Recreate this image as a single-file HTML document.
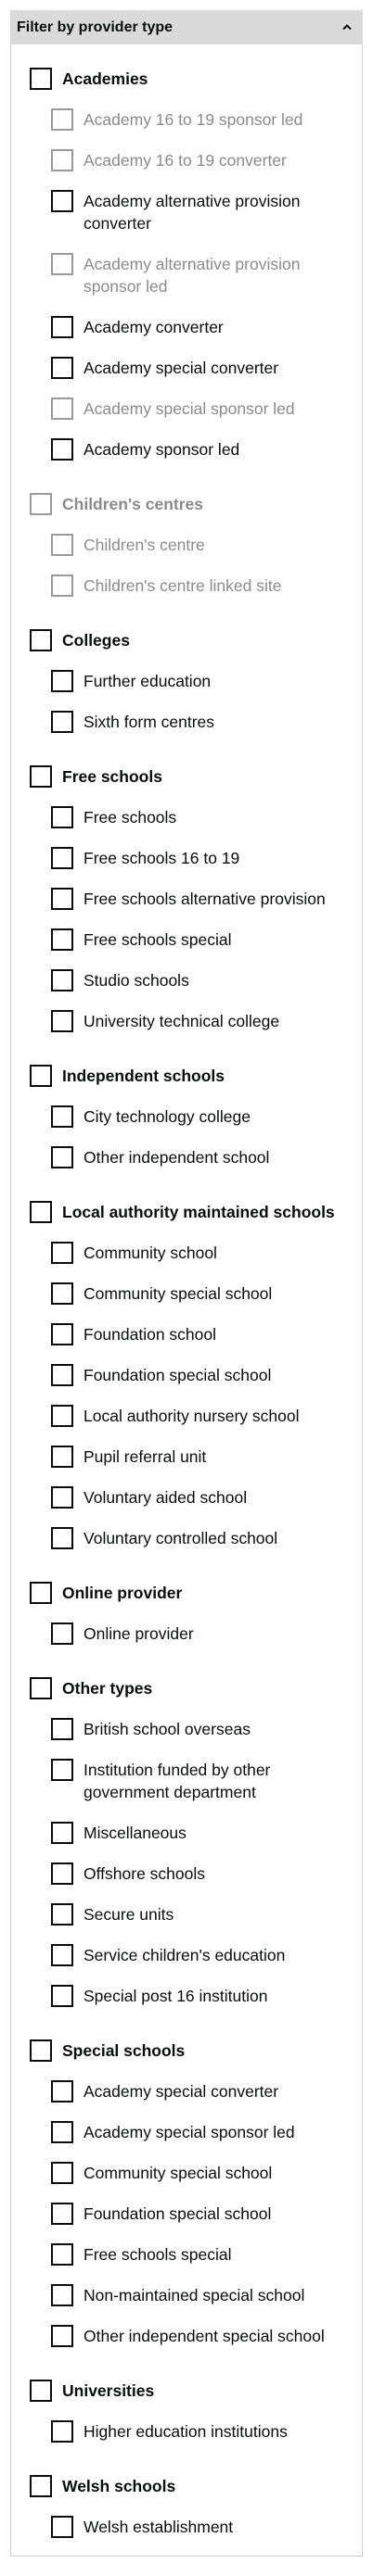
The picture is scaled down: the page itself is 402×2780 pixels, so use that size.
<!DOCTYPE html>
<html><head><meta charset="utf-8"><style>
*{box-sizing:border-box;margin:0;padding:0}
body{width:402px;height:2780px;background:#fff;font-family:"Liberation Sans",Arial,sans-serif;color:#0b0c0c;font-size:17.5px;position:relative}
.c{position:absolute;left:11px;top:11px;width:380px;height:2748px;border:1px solid #cfcfcf}
.h{height:37px;background:#dadada;font-weight:bold;font-size:16px;line-height:37px;padding-left:7px;position:relative;margin:-1px -1px 0 -1px}
.h svg{position:absolute;right:11px;top:14px}
.b{padding:25px 0 0 20px}
.r{position:relative;line-height:24px;min-height:24px;margin-bottom:20px;padding-left:35px}
.r::before{content:"";position:absolute;left:0;top:0;width:24px;height:24px;border:2px solid #0b0c0c;box-sizing:border-box}
.p{font-weight:bold}
.k{margin-left:23px}
.d{color:#8b8b8b}.d::before{border-color:#9a9a9a}
.g{margin-bottom:35px}
</style></head><body>
<div class="c">
<div class="h">Filter by provider type<svg width="12" height="8" viewBox="0 0 12 8"><path d="M2 6.5 L6 2.5 L10 6.5" fill="none" stroke="#0b0c0c" stroke-width="2"/></svg></div>
<div class="b">
<div class="r p">Academies</div>
<div class="r k d">Academy 16 to 19 sponsor led</div>
<div class="r k d">Academy 16 to 19 converter</div>
<div class="r k">Academy alternative provision<br>converter</div>
<div class="r k d">Academy alternative provision<br>sponsor led</div>
<div class="r k">Academy converter</div>
<div class="r k">Academy special converter</div>
<div class="r k d">Academy special sponsor led</div>
<div class="r k g">Academy sponsor led</div>
<div class="r p d">Children's centres</div>
<div class="r k d">Children's centre</div>
<div class="r k d g">Children's centre linked site</div>
<div class="r p">Colleges</div>
<div class="r k">Further education</div>
<div class="r k g">Sixth form centres</div>
<div class="r p">Free schools</div>
<div class="r k">Free schools</div>
<div class="r k">Free schools 16 to 19</div>
<div class="r k">Free schools alternative provision</div>
<div class="r k">Free schools special</div>
<div class="r k">Studio schools</div>
<div class="r k g">University technical college</div>
<div class="r p">Independent schools</div>
<div class="r k">City technology college</div>
<div class="r k g">Other independent school</div>
<div class="r p">Local authority maintained schools</div>
<div class="r k">Community school</div>
<div class="r k">Community special school</div>
<div class="r k">Foundation school</div>
<div class="r k">Foundation special school</div>
<div class="r k">Local authority nursery school</div>
<div class="r k">Pupil referral unit</div>
<div class="r k">Voluntary aided school</div>
<div class="r k g">Voluntary controlled school</div>
<div class="r p">Online provider</div>
<div class="r k g">Online provider</div>
<div class="r p">Other types</div>
<div class="r k">British school overseas</div>
<div class="r k">Institution funded by other<br>government department</div>
<div class="r k">Miscellaneous</div>
<div class="r k">Offshore schools</div>
<div class="r k">Secure units</div>
<div class="r k">Service children's education</div>
<div class="r k g">Special post 16 institution</div>
<div class="r p">Special schools</div>
<div class="r k">Academy special converter</div>
<div class="r k">Academy special sponsor led</div>
<div class="r k">Community special school</div>
<div class="r k">Foundation special school</div>
<div class="r k">Free schools special</div>
<div class="r k">Non-maintained special school</div>
<div class="r k g">Other independent special school</div>
<div class="r p">Universities</div>
<div class="r k g">Higher education institutions</div>
<div class="r p">Welsh schools</div>
<div class="r k">Welsh establishment</div>
</div></div>
</body></html>
